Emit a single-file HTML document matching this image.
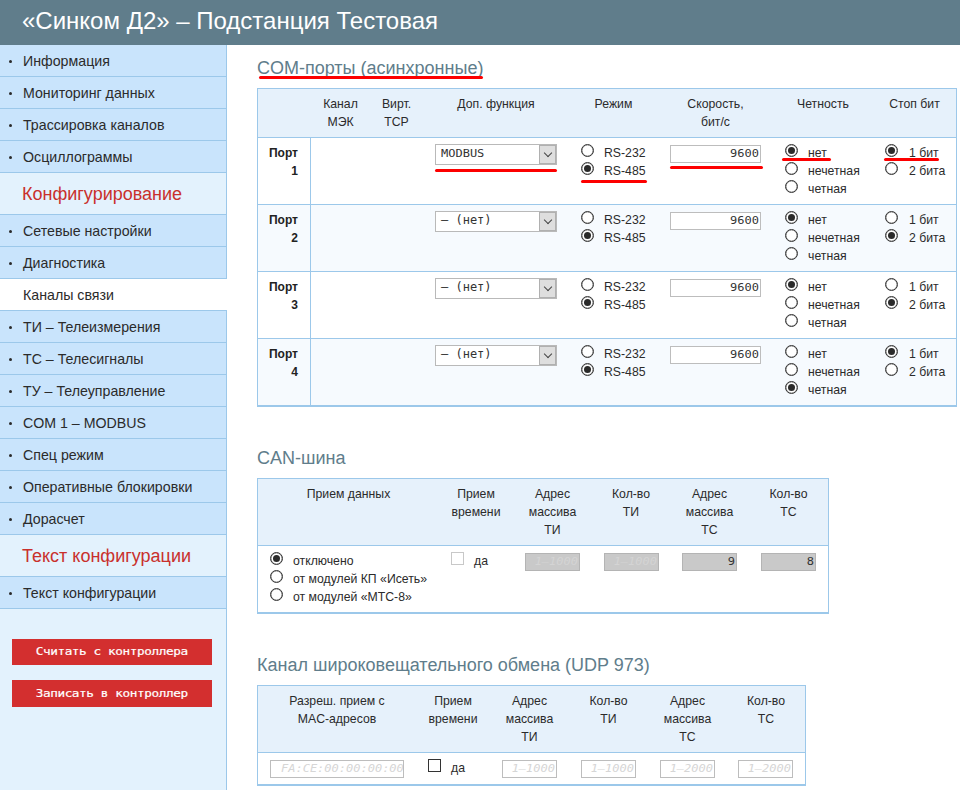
<!DOCTYPE html>
<html lang="ru">
<head>
<meta charset="utf-8">
<title>«Синком Д2» – Подстанция Тестовая</title>
<style>
*{box-sizing:border-box;}
html,body{margin:0;padding:0;}
body{width:960px;height:790px;overflow:hidden;background:#fff;font-family:"Liberation Sans",sans-serif;font-size:13px;color:#222;position:relative;}
#hdr{position:absolute;left:0;top:0;width:960px;height:45px;background:#607d8b;color:#fff;font-size:24px;line-height:28px;padding:7px 0 0 22px;white-space:nowrap;}
#side{position:absolute;left:0;top:45px;width:227px;height:745px;background:#e3f2fd;border-right:1px solid #9cc8ea;}
#side .it{position:absolute;left:0;width:227px;height:32px;background:#c9e4fc;border-bottom:1px solid #9cc8ea;border-right:1px solid #9cc8ea;font-size:14.2px;line-height:18px;padding:7px 0 0 23px;color:#2b2b2b;white-space:nowrap;}
#side .it:before{content:"";position:absolute;left:8.5px;top:14.5px;width:3.6px;height:3.6px;border-radius:50%;background:#2a2a2a;}
#side .it.act{background:#fff;border-right:none;width:227px;}
#side .it.act:before{display:none;}
#side .hd{position:absolute;left:0;width:226px;height:42px;border-bottom:1px solid #9cc8ea;font-size:18px;line-height:24px;color:#c9302c;padding:9px 0 0 22px;white-space:nowrap;}
.btn{position:absolute;left:12px;width:200px;height:26px;background:#d32f2f;color:#fff;font-family:"DejaVu Sans Mono","Liberation Mono",monospace;font-size:12px;line-height:24px;text-align:center;white-space:pre;-webkit-text-stroke:0.2px #fff;}
.btn u{display:inline-block;text-decoration:none;letter-spacing:-.4px;transform:scale(1.06,.92);transform-origin:50% 70%;}
h2{position:absolute;margin:0;left:257px;font-weight:normal;font-size:18px;line-height:22px;color:#607d8b;white-space:nowrap;}
table{position:absolute;left:257px;border-collapse:separate;border-spacing:0;border:1px solid #9cc8ea;table-layout:fixed;}
th{background:#e6f1fb;font-weight:normal;font-size:12.25px;line-height:18px;vertical-align:top;text-align:center;padding:6px 0 0 0;color:#2b2b2b;border-bottom:1px solid #9cc8ea;}
td{background:#fff;border-bottom:1px solid #9cc8ea;vertical-align:top;font-size:12.25px;line-height:18px;padding:0;color:#222;}
tr.alt td{background:#f6fafe;}
td.p{font-weight:bold;font-size:12px;text-align:right;padding:6px 12px 0 0;border-right:1px solid #9cc8ea;}
td>div{position:relative;width:100%;height:100%;}
.red{position:absolute;height:3px;background:#fd0000;border-radius:2px;z-index:5;}
.sel{position:absolute;width:122px;height:21px;border:1px solid #b9b9b9;background:#fff;font-family:"DejaVu Sans Mono","Liberation Mono",monospace;font-size:12px;line-height:17px;padding:0 0 0 5px;white-space:pre;color:#333;}
.sel i{position:absolute;right:0;top:0;width:17px;height:19px;background:#dedede;border:1px solid #b0b0b0;}
.sel i:after{content:"";position:absolute;left:4.5px;top:4px;width:5px;height:5px;border-right:1px solid #444;border-bottom:1px solid #444;transform:rotate(45deg);}
.inp{position:absolute;height:18px;border:1px solid #bdbdbd;background:#fff;font-family:"DejaVu Sans Mono","Liberation Mono",monospace;font-size:12px;line-height:15px;text-align:right;padding:0 1px 0 0;white-space:pre;overflow:hidden;color:#333;}
.inp u,.sel u{display:inline-block;text-decoration:none;transform:scaleY(.84);transform-origin:0 77%;}
.inp.dis{background:#c9c9c9;border-color:#b4b4b4;}
.inp.ph{color:#d6d6d6;font-style:italic;}
.inp.dis.ph{color:#d4d4d4;}
.r{position:absolute;width:13px;height:13px;border:1px solid #333;border-radius:50%;background:#fff;box-shadow:inset 0 0 0 .35px #555;}
.r.on:after{content:"";position:absolute;left:2px;top:2px;width:7px;height:7px;border-radius:50%;background:#2a2a2a;}
.l{position:absolute;font-size:12.25px;line-height:18px;white-space:nowrap;color:#2b2b2b;}
.cb{position:absolute;width:13px;height:13px;border:1px solid #333;background:#fff;}
.cb.dis{border-color:#c8c8c8;}
</style>
</head>
<body>
<div id="hdr">«Синком Д2» – Подстанция Тестовая</div>
<div id="side">
<div class="it" style="top:0px">Информация</div>
<div class="it" style="top:32px">Мониторинг данных</div>
<div class="it" style="top:64px">Трассировка каналов</div>
<div class="it" style="top:96px">Осциллограммы</div>
<div class="hd" style="top:128px">Конфигурирование</div>
<div class="it" style="top:170px">Сетевые настройки</div>
<div class="it" style="top:202px">Диагностика</div>
<div class="it act" style="top:234px">Каналы связи</div>
<div class="it" style="top:266px">ТИ – Телеизмерения</div>
<div class="it" style="top:298px">ТС – Телесигналы</div>
<div class="it" style="top:330px">ТУ – Телеуправление</div>
<div class="it" style="top:362px">COM 1 – MODBUS</div>
<div class="it" style="top:394px">Спец режим</div>
<div class="it" style="top:426px">Оперативные блокировки</div>
<div class="it" style="top:458px">Дорасчет</div>
<div class="hd" style="top:490px">Текст конфигурации</div>
<div class="it" style="top:532px">Текст конфигурации</div>
<div class="btn" style="top:594px"><u>Считать с контроллера</u></div>
<div class="btn" style="top:635px;height:27px;line-height:27px"><u>Записать в контроллер</u></div>
</div>
<div id="main">
<h2 style="top:57px">COM-порты (асинхронные)</h2>
<table style="top:88px;width:700px">
<colgroup><col style="width:53px"><col style="width:59px"><col style="width:53px"><col style="width:146px"><col style="width:89px"><col style="width:115px"><col style="width:100px"><col style="width:83px"></colgroup>
<tr style="height:49px"><th></th><th>Канал<br>МЭК</th><th>Вирт.<br>TCP</th><th>Доп. функция</th><th>Режим</th><th>Скорость,<br>бит/с</th><th>Четность</th><th>Стоп бит</th></tr>
<tr style="height:67px">
<td class="p">Порт<br>1</td><td></td><td></td>
<td><div><span class="sel" style="left:12px;top:6px"><u>MODBUS</u><i></i></span></div></td>
<td><div><span class="r" style="left:12px;top:6px"></span><span class="l" style="left:35px;top:6px">RS-232</span><span class="r on" style="left:12px;top:24px"></span><span class="l" style="left:35px;top:24px">RS-485</span></div></td>
<td><div><span class="inp" style="left:12px;top:7px;width:91px"><u>9600</u></span></div></td>
<td><div><span class="r on" style="left:12px;top:6px"></span><span class="l" style="left:35px;top:6px">нет</span><span class="r" style="left:12px;top:24px"></span><span class="l" style="left:35px;top:24px">нечетная</span><span class="r" style="left:12px;top:42px"></span><span class="l" style="left:35px;top:42px">четная</span></div></td>
<td><div><span class="r on" style="left:12px;top:6px"></span><span class="l" style="left:36px;top:6px">1 бит</span><span class="r" style="left:12px;top:24px"></span><span class="l" style="left:36px;top:24px">2 бита</span></div></td>
</tr>
<tr style="height:67px" class="alt">
<td class="p">Порт<br>2</td><td></td><td></td>
<td><div><span class="sel" style="left:12px;top:6px">– (нет)<i></i></span></div></td>
<td><div><span class="r" style="left:12px;top:6px"></span><span class="l" style="left:35px;top:6px">RS-232</span><span class="r on" style="left:12px;top:24px"></span><span class="l" style="left:35px;top:24px">RS-485</span></div></td>
<td><div><span class="inp" style="left:12px;top:7px;width:91px"><u>9600</u></span></div></td>
<td><div><span class="r on" style="left:12px;top:6px"></span><span class="l" style="left:35px;top:6px">нет</span><span class="r" style="left:12px;top:24px"></span><span class="l" style="left:35px;top:24px">нечетная</span><span class="r" style="left:12px;top:42px"></span><span class="l" style="left:35px;top:42px">четная</span></div></td>
<td><div><span class="r" style="left:12px;top:6px"></span><span class="l" style="left:36px;top:6px">1 бит</span><span class="r on" style="left:12px;top:24px"></span><span class="l" style="left:36px;top:24px">2 бита</span></div></td>
</tr>
<tr style="height:67px">
<td class="p">Порт<br>3</td><td></td><td></td>
<td><div><span class="sel" style="left:12px;top:6px">– (нет)<i></i></span></div></td>
<td><div><span class="r" style="left:12px;top:6px"></span><span class="l" style="left:35px;top:6px">RS-232</span><span class="r on" style="left:12px;top:24px"></span><span class="l" style="left:35px;top:24px">RS-485</span></div></td>
<td><div><span class="inp" style="left:12px;top:7px;width:91px"><u>9600</u></span></div></td>
<td><div><span class="r on" style="left:12px;top:6px"></span><span class="l" style="left:35px;top:6px">нет</span><span class="r" style="left:12px;top:24px"></span><span class="l" style="left:35px;top:24px">нечетная</span><span class="r" style="left:12px;top:42px"></span><span class="l" style="left:35px;top:42px">четная</span></div></td>
<td><div><span class="r" style="left:12px;top:6px"></span><span class="l" style="left:36px;top:6px">1 бит</span><span class="r on" style="left:12px;top:24px"></span><span class="l" style="left:36px;top:24px">2 бита</span></div></td>
</tr>
<tr style="height:67px" class="alt">
<td class="p">Порт<br>4</td><td></td><td></td>
<td><div><span class="sel" style="left:12px;top:6px">– (нет)<i></i></span></div></td>
<td><div><span class="r" style="left:12px;top:6px"></span><span class="l" style="left:35px;top:6px">RS-232</span><span class="r on" style="left:12px;top:24px"></span><span class="l" style="left:35px;top:24px">RS-485</span></div></td>
<td><div><span class="inp" style="left:12px;top:7px;width:91px"><u>9600</u></span></div></td>
<td><div><span class="r" style="left:12px;top:6px"></span><span class="l" style="left:35px;top:6px">нет</span><span class="r" style="left:12px;top:24px"></span><span class="l" style="left:35px;top:24px">нечетная</span><span class="r on" style="left:12px;top:42px"></span><span class="l" style="left:35px;top:42px">четная</span></div></td>
<td><div><span class="r on" style="left:12px;top:6px"></span><span class="l" style="left:36px;top:6px">1 бит</span><span class="r" style="left:12px;top:24px"></span><span class="l" style="left:36px;top:24px">2 бита</span></div></td>
</tr>
</table>
<h2 style="top:447px">CAN-шина</h2>
<table style="top:478px;width:572px">
<colgroup><col style="width:181px"><col style="width:74px"><col style="width:79px"><col style="width:78px"><col style="width:79px"><col style="width:79px"></colgroup>
<tr style="height:67px"><th>Прием данных</th><th>Прием<br>времени</th><th>Адрес<br>массива<br>ТИ</th><th>Кол-во<br>ТИ</th><th>Адрес<br>массива<br>ТС</th><th>Кол-во<br>ТС</th></tr>
<tr style="height:67px">
<td><div><span class="r on" style="left:12px;top:6px"></span><span class="l" style="left:35px;top:6px">отключено</span><span class="r" style="left:12px;top:24px"></span><span class="l" style="left:35px;top:24px">от модулей КП «Исеть»</span><span class="r" style="left:12px;top:42px"></span><span class="l" style="left:35px;top:42px">от модулей «МТС-8»</span></div></td>
<td><div><span class="cb dis" style="left:12px;top:6px"></span><span class="l" style="left:35px;top:6px">да</span></div></td>
<td><div><span class="inp dis ph" style="left:12px;top:7px;width:55px"><u>1–1000</u></span></div></td>
<td><div><span class="inp dis ph" style="left:12px;top:7px;width:55px"><u>1–1000</u></span></div></td>
<td><div><span class="inp dis" style="left:12px;top:7px;width:55px"><u>9</u></span></div></td>
<td><div><span class="inp dis" style="left:12px;top:7px;width:55px"><u>8</u></span></div></td>
</tr></table>
<h2 style="top:654px">Канал широковещательного обмена (UDP 973)</h2>
<table style="top:685px;width:549px">
<colgroup><col style="width:158px"><col style="width:74px"><col style="width:79px"><col style="width:79px"><col style="width:79px"><col style="width:78px"></colgroup>
<tr style="height:67px"><th>Разреш. прием с<br>MAC-адресов</th><th>Прием<br>времени</th><th>Адрес<br>массива<br>ТИ</th><th>Кол-во<br>ТИ</th><th>Адрес<br>массива<br>ТС</th><th>Кол-во<br>ТС</th></tr>
<tr style="height:32px">
<td><div><span class="inp ph" style="left:12px;top:7px;width:134px;text-align:left;padding-left:10px"><u>FA:CE:00:00:00:00</u></span></div></td>
<td><div><span class="cb" style="left:12px;top:6px"></span><span class="l" style="left:35px;top:6px">да</span></div></td>
<td><div><span class="inp ph" style="left:12px;top:7px;width:55px"><u>1–1000</u></span></div></td>
<td><div><span class="inp ph" style="left:12px;top:7px;width:55px"><u>1–1000</u></span></div></td>
<td><div><span class="inp ph" style="left:12px;top:7px;width:55px"><u>1–2000</u></span></div></td>
<td><div><span class="inp ph" style="left:11px;top:7px;width:55px"><u>1–2000</u></span></div></td>
</tr></table>
<div class="red" style="left:259px;top:76px;width:224px"></div>
<div class="red" style="left:435px;top:169px;width:122px"></div>
<div class="red" style="left:581px;top:180px;width:66px"></div>
<div class="red" style="left:670px;top:166px;width:93px"></div>
<div class="red" style="left:782px;top:158px;width:49px"></div>
<div class="red" style="left:884px;top:158px;width:55px"></div>
</div>
</body>
</html>
